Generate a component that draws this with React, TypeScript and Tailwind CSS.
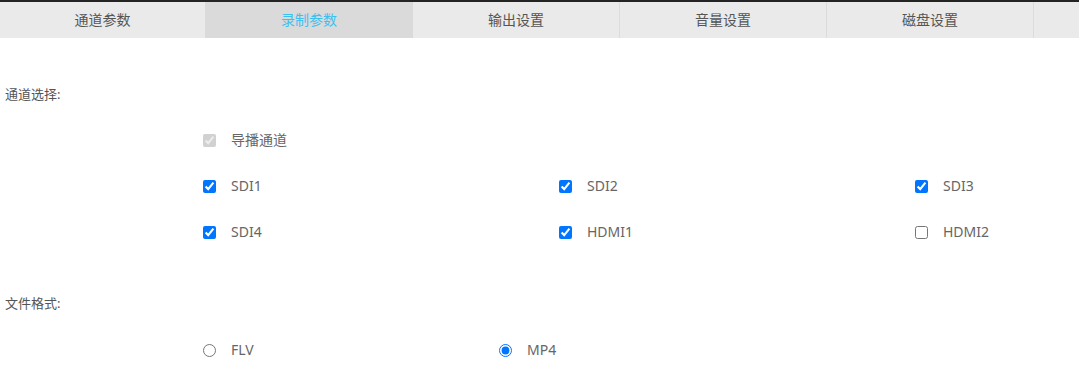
import { useState } from 'react'

const tabs = [
  { name: '通道参数', w: 'w-[205px]' },
  { name: '录制参数', w: 'w-[208px]' },
  { name: '输出设置', w: 'w-[206px]' },
  { name: '音量设置', w: 'w-[207px]' },
  { name: '磁盘设置', w: 'w-[207px]' },
]

const channels = [
  { id: 'SDI1', checked: true },
  { id: 'SDI2', checked: true },
  { id: 'SDI3', checked: true },
  { id: 'SDI4', checked: true },
  { id: 'HDMI1', checked: true },
  { id: 'HDMI2', checked: false },
]

const font = { fontFamily: '"Noto Sans", "Noto Sans CJK SC", sans-serif' }

export default function App() {
  const [active, setActive] = useState(1)
  const [checked, setChecked] = useState<Record<string, boolean>>(
    Object.fromEntries(channels.map((c) => [c.id, c.checked]))
  )
  const [format, setFormat] = useState('MP4')

  return (
    <div className="w-[1079px] h-[379px] bg-white border-t-2 border-[#242424] text-[#666]" style={font}>
      {/* Tab bar */}
      <div className="flex h-9 bg-[#eaeaea]">
        {tabs.map((t, i) => (
          <div
            key={t.name}
            onClick={() => setActive(i)}
            className={`${t.w} flex items-center justify-center text-sm cursor-pointer ${
              i === active ? 'bg-[#dadada] text-[#3cc0f0]' : 'text-[#555]'
            } ${i >= 3 ? 'border-l border-[#dcdcdc]' : ''}`}
          >
            {t.name}
          </div>
        ))}
        <div className="flex-1 border-l border-[#dcdcdc]" />
      </div>

      {/* Channel select */}
      <div className="pt-[46px] pl-[5px] text-[13px] text-[#555] leading-5">通道选择:</div>
      <div className="pl-[203px] pt-[26px]">
        <label className="flex items-center h-5 gap-[15px] text-sm text-[#666]">
          <input type="checkbox" checked disabled readOnly className="w-[13px] h-[13px] m-0" />
          导播通道
        </label>
        <div className="grid grid-cols-[356px_356px_1fr] gap-y-[26px] mt-[26px]">
          {channels.map((c) => (
            <label key={c.id} className="flex items-center h-5 gap-[15px] text-sm text-[#666]">
              <input
                type="checkbox"
                checked={checked[c.id]}
                onChange={() => setChecked({ ...checked, [c.id]: !checked[c.id] })}
                className="w-[13px] h-[13px] m-0 accent-[#0075ff]"
              />
              {c.id}
            </label>
          ))}
        </div>
      </div>

      {/* File format */}
      <div className="pt-[51px] pl-[5px] text-[13px] text-[#555] leading-5">文件格式:</div>
      <div className="pl-[203px] pt-[27px] flex">
        {['FLV', 'MP4'].map((f) => (
          <label key={f} className="w-[296px] flex items-center h-5 gap-[15px] text-sm text-[#666]">
            <input
              type="radio"
              name="format"
              checked={format === f}
              onChange={() => setFormat(f)}
              className="w-[13px] h-[13px] m-0 accent-[#0075ff]"
            />
            {f}
          </label>
        ))}
      </div>
    </div>
  )
}
